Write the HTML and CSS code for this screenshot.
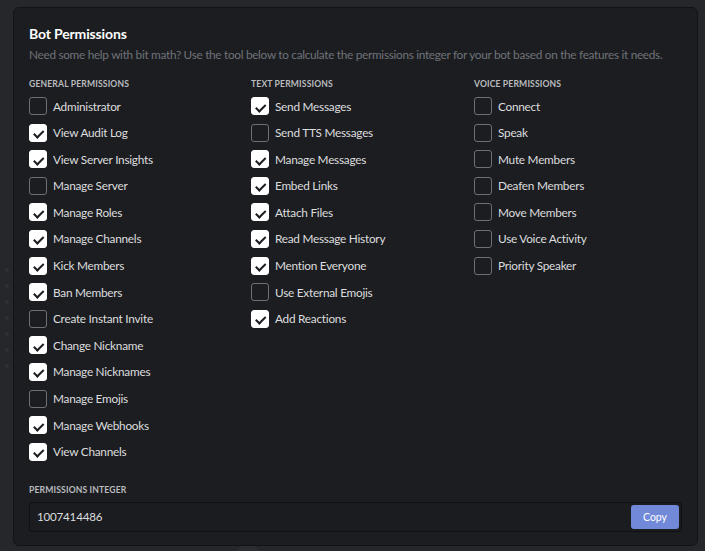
FILE: index.html
```html
<!DOCTYPE html>
<html>
<head>
<meta charset="utf-8">
<link rel="stylesheet" href="styles.css">
</head>
<body>
<div class="deco">
  <span class="dot"></span><span class="dot"></span><span class="dot"></span><span class="dot"></span><span class="dot"></span><span class="dot"></span><span class="dot"></span>
</div>
<div class="blob"></div>
<section class="panel">
  <h1 class="title">Bot Permissions</h1>
  <p class="desc">Need some help with bit math? Use the tool below to calculate the permissions integer for your bot based on the features it needs.</p>
  <div class="cols">
    <div class="col">
      <h2 class="head">General Permissions</h2>
      <ul class="list">
        <li class="item"><span class="box"></span>Administrator</li>
        <li class="item"><span class="box on"></span>View Audit Log</li>
        <li class="item"><span class="box on"></span>View Server Insights</li>
        <li class="item"><span class="box"></span>Manage Server</li>
        <li class="item"><span class="box on"></span>Manage Roles</li>
        <li class="item"><span class="box on"></span>Manage Channels</li>
        <li class="item"><span class="box on"></span>Kick Members</li>
        <li class="item"><span class="box on"></span>Ban Members</li>
        <li class="item"><span class="box"></span>Create Instant Invite</li>
        <li class="item"><span class="box on"></span>Change Nickname</li>
        <li class="item"><span class="box on"></span>Manage Nicknames</li>
        <li class="item"><span class="box"></span>Manage Emojis</li>
        <li class="item"><span class="box on"></span>Manage Webhooks</li>
        <li class="item"><span class="box on"></span>View Channels</li>
      </ul>
    </div>
    <div class="col">
      <h2 class="head">Text Permissions</h2>
      <ul class="list">
        <li class="item"><span class="box on"></span>Send Messages</li>
        <li class="item"><span class="box"></span>Send TTS Messages</li>
        <li class="item"><span class="box on"></span>Manage Messages</li>
        <li class="item"><span class="box on"></span>Embed Links</li>
        <li class="item"><span class="box on"></span>Attach Files</li>
        <li class="item"><span class="box on"></span>Read Message History</li>
        <li class="item"><span class="box on"></span>Mention Everyone</li>
        <li class="item"><span class="box"></span>Use External Emojis</li>
        <li class="item"><span class="box on"></span>Add Reactions</li>
      </ul>
    </div>
    <div class="col">
      <h2 class="head">Voice Permissions</h2>
      <ul class="list">
        <li class="item"><span class="box"></span>Connect</li>
        <li class="item"><span class="box"></span>Speak</li>
        <li class="item"><span class="box"></span>Mute Members</li>
        <li class="item"><span class="box"></span>Deafen Members</li>
        <li class="item"><span class="box"></span>Move Members</li>
        <li class="item"><span class="box"></span>Use Voice Activity</li>
        <li class="item"><span class="box"></span>Priority Speaker</li>
      </ul>
    </div>
  </div>
  <h2 class="head int-head">Permissions Integer</h2>
  <div class="field">
    <span class="value">1007414486</span>
    <button class="copy">Copy</button>
  </div>
</section>
</body>
</html>
```
FILE: styles.css
```css
* { box-sizing: border-box; }
html, body { margin: 0; padding: 0; }
body {
  width: 705px;
  height: 551px;
  background: #26272b;
  font-family: Lato, "Noto Sans", sans-serif;
  overflow: hidden;
  position: relative;
  padding: 7px 7px 0 13px;
}
.deco {
  position: absolute;
  left: 5px;
  top: 268px;
  display: flex;
  flex-direction: column;
  gap: 12px;
}
.dot {
  width: 4px;
  height: 4px;
  border-radius: 50%;
  background: #2f3035;
}
.blob {
  position: absolute;
  left: 237px;
  top: 545px;
  width: 22px;
  height: 6px;
  border-radius: 11px 11px 0 0 / 6px 6px 0 0;
  background: #2d2e33;
}
.panel {
  position: relative;
  height: 539px;
  background: #1c1d21;
  border: 1px solid #121316;
  border-radius: 6px;
  padding: 17px 15px 0 15px;
}
.title {
  margin: 0;
  font-size: 14px;
  line-height: 18px;
  font-weight: 700;
  letter-spacing: -0.15px;
  color: #ffffff;
}
.desc {
  margin: 4px 0 0;
  font-size: 11.8px;
  line-height: 16px;
  letter-spacing: -0.3px;
  color: #6f7378;
  white-space: nowrap;
}
.cols {
  display: flex;
  margin-top: 16px;
}
.col {
  flex: none;
  width: 222px;
}
.col + .col + .col {
  width: 200px;
  margin-left: 1px;
}
.head {
  margin: 0;
  font-size: 8.6px;
  line-height: 11px;
  font-weight: 700;
  text-transform: uppercase;
  color: #b9bbbe;
  letter-spacing: 0.15px;
}
.list {
  list-style: none;
  margin: 7px 0 0;
  padding: 0;
  display: flex;
  flex-direction: column;
  gap: 8.6px;
}
.item {
  display: flex;
  align-items: center;
  gap: 6px;
  height: 18px;
  font-size: 11.8px;
  letter-spacing: -0.25px;
  color: #dcddde;
  white-space: nowrap;
}
.box {
  flex: none;
  width: 18px;
  height: 18px;
  border: 1px solid #6d7076;
  border-radius: 3px;
  position: relative;
}
.box.on {
  background: #ffffff;
  border-color: #ffffff;
}
.box.on::after {
  content: "";
  position: absolute;
  left: 6px;
  top: 3.5px;
  width: 3.5px;
  height: 7.5px;
  border: solid #1c1d21;
  border-width: 0 2px 2px 0;
  transform: rotate(45deg);
}
.int-head {
  margin-top: 24px;
}
.field {
  margin-top: 6px;
  height: 30px;
  width: 653px;
  border: 1px solid #0f1013;
  border-radius: 3px;
  background: #1b1c20;
  display: flex;
  align-items: center;
  justify-content: space-between;
  padding: 0 2px 0 7px;
}
.value {
  font-size: 11.6px;
  letter-spacing: -0.2px;
  color: #dcddde;
}
.copy {
  width: 48px;
  height: 24px;
  border: none;
  border-radius: 3px;
  background: #7289da;
  color: #ffffff;
  font-family: inherit;
  font-size: 10.5px;
  padding: 0;
}
```
